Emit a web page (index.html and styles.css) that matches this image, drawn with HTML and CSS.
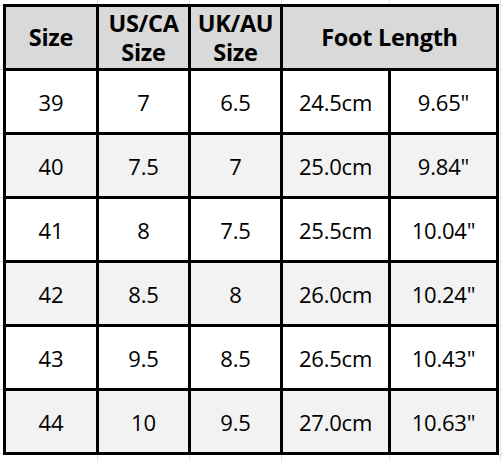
FILE: index.html
```html
<!DOCTYPE html>
<html>
<head>
<meta charset="utf-8">
<link rel="stylesheet" href="styles.css">
</head>
<body>
<div class="sheet">
  <div class="size-table">
    <div class="cell head">Size</div>
    <div class="cell head">US/CA<br>Size</div>
    <div class="cell head">UK/AU<br>Size</div>
    <div class="cell head span2">Foot Length</div>

    <div class="cell">39</div><div class="cell">7</div><div class="cell">6.5</div><div class="cell">24.5cm</div><div class="cell">9.65"</div>
    <div class="cell alt">40</div><div class="cell alt">7.5</div><div class="cell alt">7</div><div class="cell alt">25.0cm</div><div class="cell alt">9.84"</div>
    <div class="cell">41</div><div class="cell">8</div><div class="cell">7.5</div><div class="cell">25.5cm</div><div class="cell">10.04"</div>
    <div class="cell alt">42</div><div class="cell alt">8.5</div><div class="cell alt">8</div><div class="cell alt">26.0cm</div><div class="cell alt">10.24"</div>
    <div class="cell">43</div><div class="cell">9.5</div><div class="cell">8.5</div><div class="cell">26.5cm</div><div class="cell">10.43"</div>
    <div class="cell alt">44</div><div class="cell alt">10</div><div class="cell alt">9.5</div><div class="cell alt">27.0cm</div><div class="cell alt">10.63"</div>
  </div>
</div>
</body>
</html>
```
FILE: styles.css
```css
html, body {
  margin: 0;
  padding: 0;
}
body {
  width: 503px;
  height: 461px;
  overflow: hidden;
  background-color: #fff;
  background-image:
    linear-gradient(to right, transparent 97px, #e2e2e2 97px, #e2e2e2 98px, transparent 98px),
    linear-gradient(to right, transparent 189px, #e2e2e2 189px, #e2e2e2 190px, transparent 190px),
    linear-gradient(to right, transparent 281px, #e2e2e2 281px, #e2e2e2 282px, transparent 282px),
    linear-gradient(to right, transparent 389px, #e2e2e2 389px, #e2e2e2 390px, transparent 390px),
    linear-gradient(to right, transparent 500px, #e2e2e2 500px, #e2e2e2 501px, transparent 501px),
    repeating-linear-gradient(to bottom, transparent 0, transparent 5px, #e2e2e2 5px, #e2e2e2 6px, transparent 6px, transparent 64px);
  font-family: "Open Sans", "Noto Sans", sans-serif;
  color: #000;
}
.sheet {
  padding: 4px 0 0 3px;
}
.size-table {
  display: grid;
  grid-template-columns: 90px 89px 89px 105px 105px;
  grid-auto-rows: 61px;
  gap: 3px;
  padding: 3px;
  background: #000;
  width: max-content;
}
.cell {
  background: #fff;
  display: flex;
  align-items: center;
  justify-content: center;
  text-align: center;
  font-size: 22px;
  line-height: 28px;
  padding-top: 1px;
  box-sizing: border-box;
  letter-spacing: -0.2px;
}
.cell.alt {
  background: #f2f2f2;
}
.cell.head {
  background: #d9d9d9;
  font-weight: 700;
  font-size: 23.5px;
  line-height: 29px;
  padding-top: 0;
  letter-spacing: -0.3px;
}
.span2 {
  grid-column: span 2;
}
```
